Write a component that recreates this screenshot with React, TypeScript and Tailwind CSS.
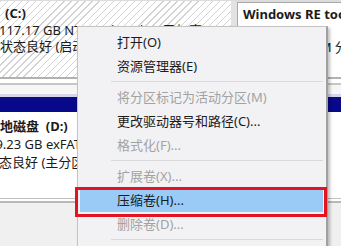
import React from "react";

type Item = { label: string; disabled?: boolean; active?: boolean } | "sep";

const items: Item[] = [
  { label: "打开(O)" },
  { label: "资源管理器(E)" },
  "sep",
  { label: "将分区标记为活动分区(M)", disabled: true },
  { label: "更改驱动器号和路径(C)..." },
  { label: "格式化(F)...", disabled: true },
  "sep",
  { label: "扩展卷(X)...", disabled: true },
  { label: "压缩卷(H)...", active: true },
  { label: "删除卷(D)...", disabled: true },
  "sep",
  { label: "属性(P)" },
];

export default function App() {
  return (
    <div className="relative w-[341px] h-[246px] overflow-hidden bg-[#f0f0f0] text-[13px] text-[#1b1b1b] font-['Noto_Sans','Noto_Sans_CJK_SC',sans-serif]">
      {/* disk row 0 */}
      <div className="flex h-[77px] bg-[#dcdcdc] pt-[1px]">
        <div className="w-[231px] shrink-0 bg-[repeating-linear-gradient(135deg,#d2d2d2_0px,#d2d2d2_1px,#ffffff_1px,#ffffff_5px)] pt-[4px] leading-[16.5px] whitespace-nowrap overflow-hidden">
          <div className="ml-[5px] font-bold">(C:)</div>
          <div className="ml-[-1px]">117.17 GB NTFS (BitLocker 已加密)</div>
          <div>状态良好 (启动, 页面文件, 故障转储, 基本数据分区)</div>
        </div>
        <div className="w-[6px] shrink-0 bg-[#e2e2e2]" />
        <div className="flex-1 mt-[1px] border-l border-t border-[#a8a8a8] bg-white pl-[5px] pt-[3px] leading-[16.5px] whitespace-nowrap overflow-hidden">
          <div className="font-bold">Windows RE tools</div>
          <div>1.00 GB NTFS</div>
          <div>状态良好 (OEM 分区)</div>
        </div>
      </div>
      <div className="h-[2px] bg-[#b2b2b2]" />
      <div className="h-[4px] bg-white" />
      <div className="h-[2px] bg-[#c6c6c6]" />
      <div className="h-[9px] bg-[#f6f6f6]" />
      <div className="h-[3px] bg-[#d6d6ea]" />
      <div className="h-[15px] bg-[#08088a]" />

      {/* disk row 1 */}
      <div className="h-[86px] bg-white pt-[5px] leading-[18px] whitespace-nowrap">
        <div className="ml-[-13px] font-bold">本地磁盘&nbsp;&nbsp;(D:)</div>
        <div className="ml-[-12px]">29.23 GB exFAT</div>
        <div className="ml-[-14px]">状态良好 (主分区)</div>
      </div>
      <div className="h-[1px] bg-[#c0c0c0]" />
      <div className="h-[2px] bg-white" />
      <div className="h-[2px] bg-[#b8b8b8]" />

      {/* context menu */}
      <div className="absolute left-[77px] top-[26px] w-[251px] h-[240px] bg-[#f2f2f4] border border-[#c4c4c4] border-r-2 border-r-[#a0a0a0] shadow-[2px_2px_3px_rgba(0,0,0,0.25)] pt-[3px]">
        {items.map((it, i) =>
          it === "sep" ? (
            <div key={i} className="h-[7px] flex items-center pl-[33px] pr-[3px]">
              <div className="h-px w-full bg-[#d9d9d9]" />
            </div>
          ) : (
            <div
              key={i}
              className={
                "h-[24px] leading-[24px] ml-[2px] mr-[3px] pl-[37px] whitespace-nowrap " +
                (it.active ? "bg-[#99cbf6] " : "") +
                (it.disabled ? "text-[#a2a2a2]" : "text-[#1b1b1b]")
              }
            >
              {it.label}
            </div>
          )
        )}
      </div>

      {/* red annotation box */}
      <div className="absolute left-[75px] top-[187px] w-[252px] h-[30px] border-[3px] border-[#e3141f]" />
    </div>
  );
}
